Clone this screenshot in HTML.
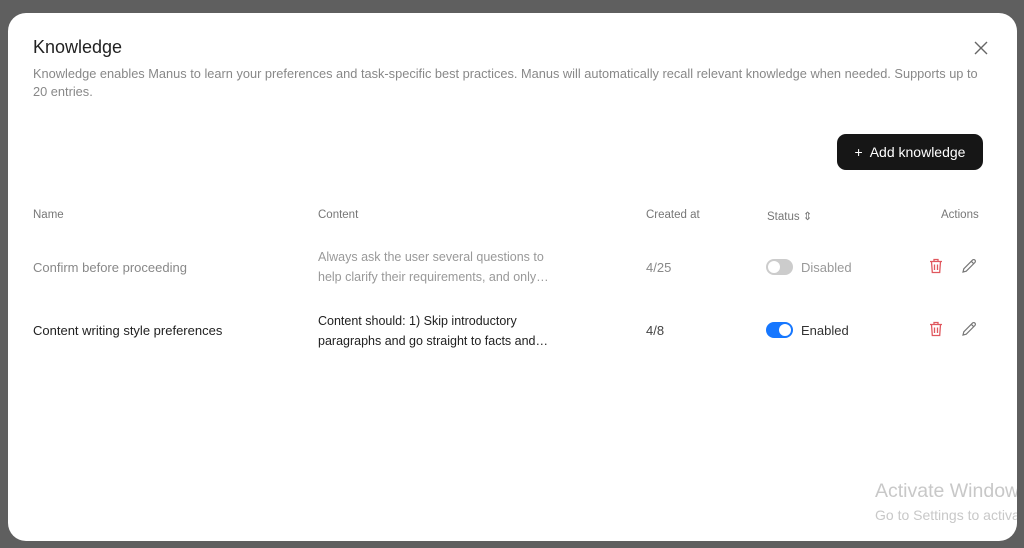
<!DOCTYPE html>
<html><head><style>
body{margin:0;width:1024px;height:548px;background:#5f5f5f;font-family:"Liberation Sans",sans-serif;overflow:hidden;position:relative}
.m{position:absolute;left:8px;top:13px;width:1009px;height:528px;background:#fff;border-radius:18px;overflow:hidden}
.a{position:absolute;white-space:nowrap}
h1{position:absolute;left:25px;top:24px;margin:0;font-size:18px;font-weight:normal;color:#222}
.d{left:25px;top:52px;font-size:12.8px;color:#888;line-height:18px;white-space:normal;width:950px}
.btn{position:absolute;left:829px;top:121px;width:146px;height:36px;background:#161616;border-radius:9px;color:#fff;font-size:14px;line-height:36px;text-align:center}
.h{top:196px;font-size:11.5px;color:#777}
.r{font-size:13px}
.c{font-size:12.5px;line-height:20px;white-space:normal;width:245px}
.tg{position:absolute;width:27px;height:16px;border-radius:8px}
.tg i{position:absolute;top:2px;width:12px;height:12px;border-radius:50%;background:#fff}
.w{color:#c8c8c8}
</style></head><body>
<div class="m">
<h1>Knowledge</h1>
<svg class="a" style="left:966px;top:28px" width="14" height="14" viewBox="0 0 14 14"><path d="M1 1L13 13M13 1L1 13" stroke="#666" stroke-width="1.4"/></svg>
<div class="a d">Knowledge enables Manus to learn your preferences and task-specific best practices. Manus will automatically recall relevant knowledge when needed. Supports up to 20 entries.</div>
<div class="btn">+&nbsp; Add knowledge</div>
<div class="a h" style="left:25px">Name</div>
<div class="a h" style="left:310px">Content</div>
<div class="a h" style="left:638px">Created at</div>
<div class="a h" style="left:759px">Status ⇕</div>
<div class="a h" style="left:933px">Actions</div>

<div class="a r" style="left:25px;top:247px;color:#888">Confirm before proceeding</div>
<div class="a c" style="left:310px;top:234px;color:#999">Always ask the user several questions to help clarify their requirements, and only…</div>
<div class="a r" style="left:638px;top:247px;color:#888">4/25</div>
<div class="tg" style="left:758px;top:246px;background:#ccc"><i style="left:2px"></i></div>
<div class="a r" style="left:793px;top:247px;color:#999">Disabled</div>

<div class="a r" style="left:25px;top:310px;color:#222">Content writing style preferences</div>
<div class="a c" style="left:310px;top:298px;color:#222">Content should: 1) Skip introductory paragraphs and go straight to facts and…</div>
<div class="a r" style="left:638px;top:310px;color:#444">4/8</div>
<div class="tg" style="left:758px;top:309px;background:#1677ff"><i style="left:13px"></i></div>
<div class="a r" style="left:793px;top:310px;color:#333">Enabled</div>

<svg class="a" style="left:921px;top:245px" width="14" height="16" viewBox="0 0 14 16"><path d="M1 3.5H13M5 3.5V1.5H9V3.5M2.5 3.5L3.3 14.5H10.7L11.5 3.5M5.5 6.5V12M8.5 6.5V12" stroke="#e0575e" stroke-width="1.3" fill="none"/></svg>
<svg class="a" style="left:953px;top:245px" width="16" height="16" viewBox="0 0 16 16"><path d="M2 14L2.8 10.8L11.5 2.1A1.4 1.4 0 0 1 13.9 4.5L5.2 13.2ZM10.3 3.3L12.7 5.7" stroke="#777" stroke-width="1.2" fill="none"/></svg>
<svg class="a" style="left:921px;top:308px" width="14" height="16" viewBox="0 0 14 16"><path d="M1 3.5H13M5 3.5V1.5H9V3.5M2.5 3.5L3.3 14.5H10.7L11.5 3.5M5.5 6.5V12M8.5 6.5V12" stroke="#e0575e" stroke-width="1.3" fill="none"/></svg>
<svg class="a" style="left:953px;top:308px" width="16" height="16" viewBox="0 0 16 16"><path d="M2 14L2.8 10.8L11.5 2.1A1.4 1.4 0 0 1 13.9 4.5L5.2 13.2ZM10.3 3.3L12.7 5.7" stroke="#777" stroke-width="1.2" fill="none"/></svg>

<div class="a w" style="left:867px;top:467px;font-size:19.5px">Activate Windows</div>
<div class="a w" style="left:867px;top:494px;font-size:14px">Go to Settings to activate Windows.</div>
</div>
</body></html>
